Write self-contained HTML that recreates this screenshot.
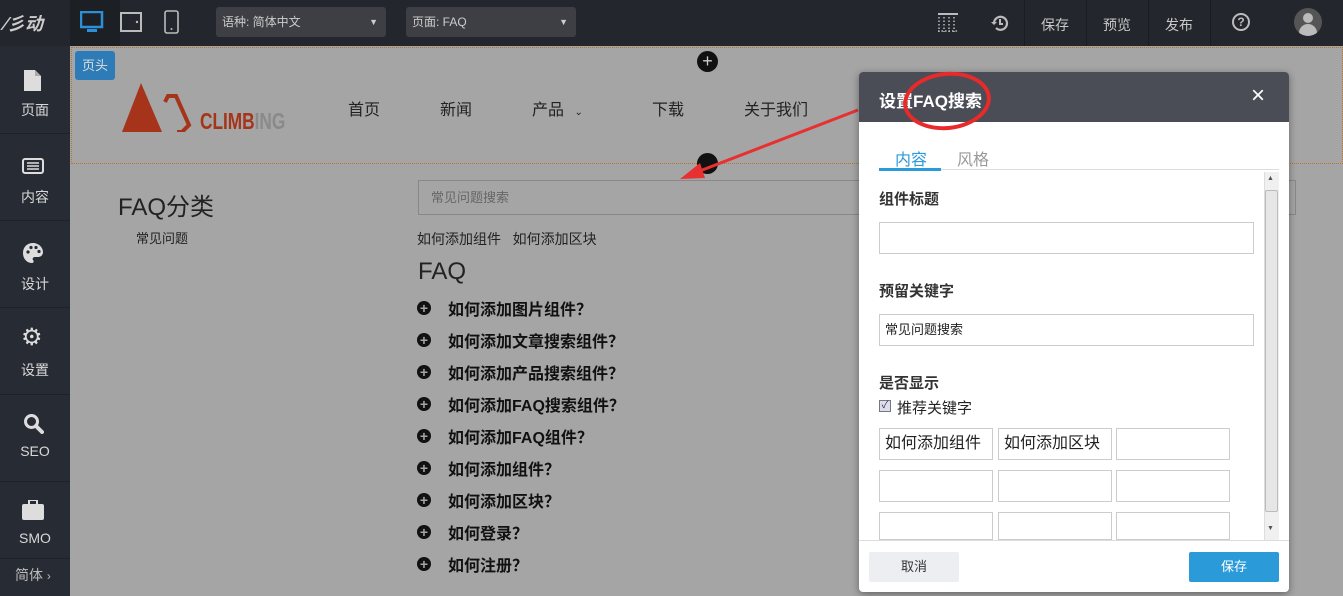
<!DOCTYPE html>
<html><head><meta charset="utf-8">
<style>
*{margin:0;padding:0;box-sizing:border-box}
body{width:1343px;height:596px;overflow:hidden;background:#a5a5a5;font-family:"Liberation Sans","Noto Sans CJK SC",sans-serif;position:relative}
.a{position:absolute}
.top{left:0;top:0;width:1343px;height:46px;background:#23262c}
.side{left:0;top:46px;width:70px;height:550px;background:#272b33}
.si{position:absolute;left:0;width:70px;text-align:center;color:#d8d8d8;font-size:14px}
.sep{position:absolute;left:0;width:70px;height:1px;background:#1e2128}
.sel{background:#3d3f44;border-radius:3px;color:#ccc;font-size:12px;padding-left:6px;line-height:36px}
.tb{color:#c8c8c8;font-size:14px}
.vs{position:absolute;top:0;width:1px;height:46px;background:#1a1c21}
.nav{font-size:16px;color:#222;top:96px}
.q{font-size:16px;font-weight:bold;color:#111;left:448px}
.pl{left:417px;width:14px;height:14px;border-radius:50%;background:#111;color:#a5a5a5;font-size:14px;line-height:14px;text-align:center;font-weight:bold}
.inp{position:absolute;border:1px solid #ccc;background:#fff;height:32px;font-size:16px;color:#222;line-height:30px;padding-left:5px}
.lbl{position:absolute;left:20px;font-size:15px;font-weight:bold;color:#333}
</style></head><body>
<div class="a top"></div>
<div class="a" style="left:70px;top:0;width:50px;height:46px;background:#1c1f24"></div>
<div class="a" style="left:4px;top:10px;color:#ccc;font-style:italic;font-weight:bold;font-size:18px">⁄彡动</div>
<svg class="a" style="left:80px;top:11px" width="24" height="24"><rect x="1" y="1" width="21" height="15" fill="none" stroke="#2d8fd5" stroke-width="2.5"/><rect x="7" y="18" width="10" height="3" fill="#2d8fd5"/></svg>
<svg class="a" style="left:120px;top:12px" width="24" height="22"><rect x="1" y="1" width="20" height="18" fill="none" stroke="#bbb" stroke-width="2"/><circle cx="17" cy="10" r="1.2" fill="#bbb"/></svg>
<svg class="a" style="left:164px;top:10px" width="16" height="25"><rect x="1" y="1" width="13" height="22" rx="2" fill="none" stroke="#bbb" stroke-width="1.6"/><circle cx="7.5" cy="19" r="1" fill="#bbb"/></svg>
<div class="a sel" style="left:216px;top:7px;width:170px;height:30px;line-height:30px">语种: 简体中文<span style="position:absolute;right:8px;font-size:9px">▼</span></div>
<div class="a sel" style="left:406px;top:7px;width:170px;height:30px;line-height:30px">页面: FAQ<span style="position:absolute;right:8px;font-size:9px">▼</span></div>
<svg class="a" style="left:938px;top:13px" width="20" height="19"><g fill="none" stroke="#bbb" stroke-width="1.5" stroke-dasharray="1.5 2"><path d="M0 1H20M1 4V19M6 4V19M11 4V19M16 4V19M0 18H20"/></g><path d="M0 1H20" stroke="#bbb" stroke-width="2"/></svg>
<svg class="a" style="left:990px;top:13px" width="20" height="20"><path d="M4 10a6.5 6.5 0 1 1 2 5" fill="none" stroke="#bbb" stroke-width="2.2"/><path d="M1 9l3 3 3-3z" fill="#bbb"/><path d="M10 6v5h3" fill="none" stroke="#bbb" stroke-width="2"/></svg>
<div class="vs" style="left:1024px"></div><div class="vs" style="left:1086px"></div><div class="vs" style="left:1148px"></div><div class="vs" style="left:1210px"></div>
<div class="a tb" style="left:1041px;top:15px">保存</div>
<div class="a tb" style="left:1103px;top:15px">预览</div>
<div class="a tb" style="left:1165px;top:15px">发布</div>
<div class="a" style="left:1232px;top:13px;width:18px;height:18px;border:2px solid #bbb;border-radius:50%;color:#bbb;font-size:12px;font-weight:bold;text-align:center;line-height:14px">?</div>
<div class="a" style="left:1294px;top:8px;width:28px;height:28px;border-radius:50%;background:#555;overflow:hidden"><div class="a" style="left:9px;top:5px;width:10px;height:10px;border-radius:50%;background:#bbb"></div><div class="a" style="left:5px;top:16px;width:18px;height:12px;border-radius:9px 9px 0 0;background:#bbb"></div></div>

<div class="a side"></div>
<svg class="a" style="left:24px;top:70px" width="18" height="21"><path d="M0 0H11L17 6V21H0Z" fill="#ddd"/><path d="M11 0V6H17" fill="#aaa"/></svg>
<div class="si" style="top:100px">页面</div>
<div class="sep" style="top:133px"></div>
<svg class="a" style="left:22px;top:158px" width="22" height="18"><rect x="1" y="1" width="20" height="14" rx="2" fill="none" stroke="#ddd" stroke-width="2"/><path d="M5 5H17M5 8H17M5 11H17" stroke="#ddd" stroke-width="1.5"/></svg>
<div class="si" style="top:187px">内容</div>
<div class="sep" style="top:220px"></div>
<svg class="a" style="left:22px;top:242px" width="22" height="22"><path d="M11 1C5 1 1 5 1 11s4 10 9 10c2 0 2-2 1-3s0-3 2-3h3c3 0 5-2 5-5C21 5 16 1 11 1z" fill="#ddd"/><circle cx="6" cy="10" r="1.6" fill="#272b33"/><circle cx="9" cy="5.5" r="1.6" fill="#272b33"/><circle cx="14" cy="5.5" r="1.6" fill="#272b33"/><circle cx="17" cy="9.5" r="1.6" fill="#272b33"/></svg>
<div class="si" style="top:274px">设计</div>
<div class="sep" style="top:307px"></div>
<div class="a" style="left:21px;top:326px;font-size:24px;color:#ddd;line-height:24px">⚙</div>
<div class="si" style="top:360px">设置</div>
<div class="sep" style="top:394px"></div>
<svg class="a" style="left:23px;top:413px" width="21" height="21"><circle cx="8.5" cy="8.5" r="6" fill="none" stroke="#ddd" stroke-width="3"/><path d="M13 13l6 6" stroke="#ddd" stroke-width="4" stroke-linecap="round"/></svg>
<div class="si" style="top:443px">SEO</div>
<div class="sep" style="top:481px"></div>
<svg class="a" style="left:22px;top:500px" width="22" height="20"><rect x="0" y="4" width="22" height="16" rx="2" fill="#ddd"/><rect x="7" y="0" width="8" height="5" fill="none" stroke="#ddd" stroke-width="2"/></svg>
<div class="si" style="top:530px">SMO</div>
<div class="sep" style="top:558px"></div>
<div class="a" style="left:15px;top:565px;color:#bbb;font-size:14px">简体 <span style="font-size:12px">›</span></div>

<div class="a" style="left:71px;top:47px;width:1272px;height:117px;border:1px dotted #b8732a"></div>
<div class="a" style="left:75px;top:51px;width:40px;height:29px;background:#2d7cb7;border-radius:3px;color:#ddd;font-size:13px;line-height:29px;text-align:center">页头</div>
<div class="a" style="left:697px;top:51px;width:21px;height:21px;border-radius:50%;background:#111;color:#ccc;text-align:center;line-height:21px;font-size:18px">+</div>
<div class="a" style="left:697px;top:153px;width:21px;height:21px;border-radius:50%;background:#111"></div>
<svg class="a" style="left:120px;top:82px" width="80" height="50"><path d="M21 1L2 50H42Z" fill="#a5341a"/><path d="M45 20L48 14L56 14L69 43L62 50L57 50" fill="none" stroke="#a5341a" stroke-width="4"/></svg>
<div class="a" style="left:200px;top:108px;font-size:23px;font-weight:bold;color:#a5341a;transform:scaleX(.75);transform-origin:left">CLIMB<span style="color:#8a8a8a">ING</span></div>
<div class="a nav" style="left:348px">首页</div>
<div class="a nav" style="left:440px">新闻</div>
<div class="a nav" style="left:532px">产品 <span style="font-size:10px;margin-left:6px">⌄</span></div>
<div class="a nav" style="left:652px">下载</div>
<div class="a nav" style="left:744px">关于我们</div>

<div class="a" style="left:118px;top:187px;font-size:24px;color:#222">FAQ分类</div>
<div class="a" style="left:136px;top:228px;font-size:13px;color:#222">常见问题</div>
<div class="a" style="left:418px;top:180px;width:878px;height:35px;border:1px solid #888;font-size:13px;color:#666;line-height:33px;padding-left:12px">常见问题搜索</div>
<div class="a" style="left:417px;top:229px;font-size:14px;color:#222">如何添加组件&nbsp;&nbsp;&nbsp;如何添加区块</div>
<div class="a" style="left:418px;top:258px;font-size:24px;color:#222">FAQ</div>
<div class="a pl" style="top:301px">+</div><div class="a q" style="top:296px">如何添加图片组件？</div>
<div class="a pl" style="top:333px">+</div><div class="a q" style="top:328px">如何添加文章搜索组件？</div>
<div class="a pl" style="top:365px">+</div><div class="a q" style="top:360px">如何添加产品搜索组件？</div>
<div class="a pl" style="top:397px">+</div><div class="a q" style="top:392px">如何添加FAQ搜索组件？</div>
<div class="a pl" style="top:429px">+</div><div class="a q" style="top:424px">如何添加FAQ组件？</div>
<div class="a pl" style="top:461px">+</div><div class="a q" style="top:456px">如何添加组件？</div>
<div class="a pl" style="top:493px">+</div><div class="a q" style="top:488px">如何添加区块？</div>
<div class="a pl" style="top:525px">+</div><div class="a q" style="top:520px">如何登录？</div>
<div class="a pl" style="top:557px">+</div><div class="a q" style="top:552px">如何注册？</div>

<svg class="a" style="left:670px;top:100px" width="200" height="90"><path d="M188 10L22 74" stroke="#e83030" stroke-width="3"/><path d="M10 79L30 63L35 78Z" fill="#e83030"/></svg>

<div class="a" style="left:859px;top:72px;width:430px;height:520px;background:#fff;border-radius:4px;box-shadow:0 2px 8px rgba(0,0,0,.4);overflow:hidden">
 <div class="a" style="left:0;top:0;width:430px;height:50px;background:#4a4d55"></div>
 <div class="a" style="left:20px;top:15px;color:#fff;font-size:17px;font-weight:bold">设置FAQ搜索</div>
 <div class="a" style="left:392px;top:10px;color:#fff;font-size:24px">×</div>
 <div class="a" style="left:36px;top:74px;color:#2a9ad8;font-size:16px">内容</div>
 <div class="a" style="left:98px;top:74px;color:#999;font-size:16px">风格</div>
 <div class="a" style="left:20px;top:97px;width:400px;height:1px;background:#ddd"></div>
 <div class="a" style="left:20px;top:96px;width:62px;height:3px;background:#2a9ad8"></div>
 <div class="a" style="left:405px;top:100px;width:15px;height:368px;background:#f0f0f0;border-left:1px solid #ddd"></div>
 <div class="a" style="left:406px;top:118px;width:13px;height:322px;background:#e6e6e6;border:1px solid #bbb;border-radius:2px"></div>
 <div class="a" style="left:408px;top:103px;font-size:7px;color:#555">▲</div>
 <div class="a" style="left:408px;top:453px;font-size:7px;color:#555">▼</div>
 <div class="lbl" style="top:116px">组件标题</div>
 <div class="inp" style="left:20px;top:150px;width:375px"></div>
 <div class="lbl" style="top:208px">预留关键字</div>
 <div class="inp" style="left:20px;top:242px;width:375px;font-size:13px">常见问题搜索</div>
 <div class="lbl" style="top:300px">是否显示</div>
 <div class="a" style="left:20px;top:328px;width:12px;height:12px;border:1px solid #777;background:#dde;font-size:10px;line-height:10px;color:#335;text-align:center">✓</div>
 <div class="a" style="left:38px;top:325px;font-size:15px;color:#222">推荐关键字</div>
 <div class="inp" style="left:20px;top:356px;width:114px">如何添加组件</div>
 <div class="inp" style="left:139px;top:356px;width:114px">如何添加区块</div>
 <div class="inp" style="left:257px;top:356px;width:114px"></div>
 <div class="inp" style="left:20px;top:398px;width:114px"></div>
 <div class="inp" style="left:139px;top:398px;width:114px"></div>
 <div class="inp" style="left:257px;top:398px;width:114px"></div>
 <div class="inp" style="left:20px;top:440px;width:114px;height:28px"></div>
 <div class="inp" style="left:139px;top:440px;width:114px;height:28px"></div>
 <div class="inp" style="left:257px;top:440px;width:114px;height:28px"></div>
 <div class="a" style="left:0;top:468px;width:430px;height:1px;background:#ddd"></div>
 <div class="a" style="left:10px;top:480px;width:90px;height:30px;background:#eceef1;border-radius:2px;text-align:center;line-height:30px;font-size:13px;color:#333">取消</div>
 <div class="a" style="left:330px;top:480px;width:90px;height:30px;background:#2a9ad8;border-radius:2px;text-align:center;line-height:30px;font-size:13px;color:#fff">保存</div>
</div>
<div class="a" style="left:903px;top:72px;width:88px;height:58px;border:4px solid #e82a2a;border-radius:50%;transform:rotate(-6deg)"></div>
</body></html>
